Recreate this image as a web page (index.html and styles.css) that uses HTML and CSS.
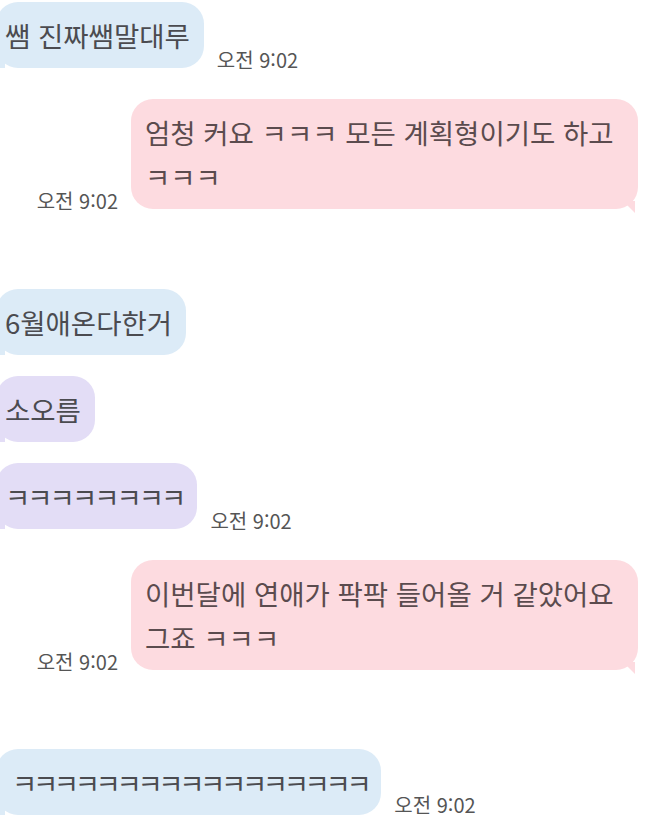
FILE: index.html
```html
<!DOCTYPE html>
<html lang="ko">
<head>
    <meta charset="UTF-8" />
    <meta name="viewport" content="width=device-width, initial-scale=1.0">
    <title>채팅</title>
    <link rel="stylesheet" href="styles.css">
</head>
<body>

    <div class="chat">
        <div class="row left first">
            <div class="bubble blue">쌤 진짜쌤말대루</div>
            <span class="time">오전 9:02</span>
        </div>

        <div class="row right gap-s">
            <span class="time">오전 9:02</span>
            <div class="bubble pink">엄청 커요 ㅋㅋㅋ 모든 계획형이기도 하고 ㅋㅋㅋ</div>
        </div>

        <div class="row left gap-l">
            <div class="bubble blue">6월애온다한거</div>
        </div>

        <div class="row left gap-xs">
            <div class="bubble purple">소오름</div>
        </div>

        <div class="row left gap-xs">
            <div class="bubble purple"><span class="kk">ㅋㅋㅋㅋㅋㅋㅋㅋ</span></div>
            <span class="time">오전 9:02</span>
        </div>

        <div class="row right gap-s">
            <span class="time">오전 9:02</span>
            <div class="bubble pink">이번달에 연애가 팍팍 들어올 거 같았어요 그죠 ㅋㅋㅋ</div>
        </div>

        <div class="row left gap-l last">
            <div class="bubble blue wide-pad"><span class="kk tight">ㅋㅋㅋㅋㅋㅋㅋㅋㅋㅋㅋㅋㅋㅋㅋㅋㅋ</span></div>
            <span class="time">오전 9:02</span>
        </div>
    </div>

</body>
</html>
```

FILE: styles.css
```css
* {
    box-sizing: border-box;
}

body {
    margin: 0;
    background: #ffffff;
    font-family: "Noto Sans CJK KR", "Noto Sans", sans-serif;
    overflow: hidden;
}

.chat {
    width: 653px;
    padding-top: 2px;
    display: flex;
    flex-direction: column;
}

.row {
    display: flex;
    align-items: flex-end;
    gap: 13px;
}

.row.left {
    justify-content: flex-start;
    margin-left: -4px;
}

.row.right {
    justify-content: flex-end;
    padding-right: 15px;
}

.gap-xs { margin-top: 21px; }
.gap-s  { margin-top: 31px; }
.gap-l  { margin-top: 80px; }

.row.last {
    margin-top: 79px;
}

/* --- bubbles --- */
.bubble {
    position: relative;
    font-size: 27.5px;
    line-height: 44px;
    padding: 11px 14px 11px 9px;
    border-radius: 22px;
    color: #4b4b50;
    word-break: keep-all;
}

.bubble.blue {
    background: #dcebf7;
}

.bubble.purple {
    background: #e3ddf6;
}

.bubble.pink {
    background: #fddbe0;
    color: #5b4b4e;
    max-width: 507px;
    padding: 11px 14px 11px 14px;
}

.bubble.wide-pad {
    padding-left: 16px;
}

/* tails */
.row.left .bubble::after {
    content: "";
    position: absolute;
    left: -5px;
    bottom: 0;
    width: 14px;
    height: 14px;
    background: inherit;
    clip-path: polygon(0 100%, 100% 0, 100% 100%);
}

.row.right .bubble::after {
    content: "";
    position: absolute;
    right: 3px;
    bottom: -4px;
    width: 12px;
    height: 12px;
    background: inherit;
    clip-path: polygon(0 0, 100% 0, 100% 100%);
}

.kk {
    letter-spacing: -3px;
}

.kk.tight {
    letter-spacing: -4.4px;
}

/* --- timestamps --- */
.time {
    font-size: 20px;
    line-height: 20px;
    color: #555555;
    white-space: nowrap;
    margin-bottom: -2px;
}

.row.last .time {
    margin-bottom: 0;
}
```
